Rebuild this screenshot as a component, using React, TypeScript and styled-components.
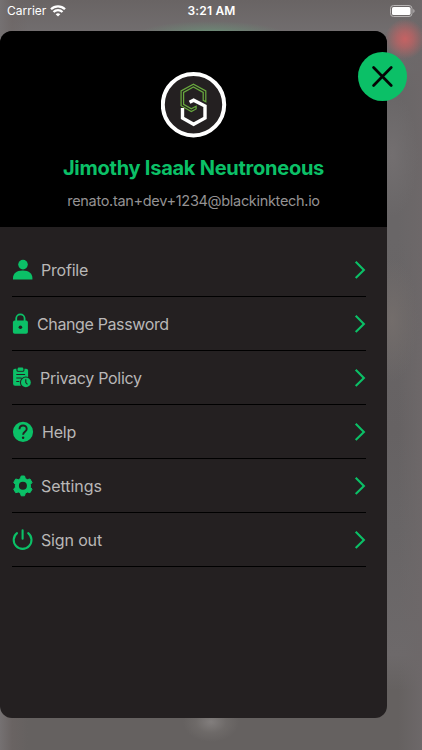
import React from "react";
import styled, { createGlobalStyle } from "styled-components";

const GREEN = "#0bc067";

const GlobalStyle = createGlobalStyle`
  * { box-sizing: border-box; }
  html, body { margin: 0; padding: 0; }
  body { font-family: Inter, "Liberation Sans", sans-serif; overflow: hidden; }
`;

const Screen = styled.div`
  width: 422px;
  height: 750px;
  overflow: hidden;
  background:
    radial-gradient(ellipse 20px 20px at 405px 39px, #c56263 0%, rgba(190, 98, 99, 0.75) 40%, rgba(150, 98, 98, 0) 100%),
    radial-gradient(ellipse 75px 14px at 211px 35px, #6a9a78 0%, rgba(106, 145, 120, 0.5) 45%, rgba(106, 130, 115, 0) 100%),
    radial-gradient(ellipse 28px 20px at 211px 722px, #827e7d 0%, rgba(118, 114, 112, 0.5) 55%, rgba(104, 99, 98, 0) 100%),
    radial-gradient(ellipse 26px 62px at 392px 155px, #736f70 0%, rgba(115, 111, 112, 0) 100%),
    radial-gradient(ellipse 26px 62px at 392px 320px, #736d6b 0%, rgba(115, 109, 107, 0) 100%),
    linear-gradient(90deg, #757172 0, rgba(110, 102, 101, 0.5) 12px, rgba(101, 97, 96, 0) 28px, rgba(101, 97, 96, 0) 398px, #6d6869 422px),
    linear-gradient(180deg, #696464 0, #716d6e 30px, #696667 90px, #696667 240px, #666263 430px, #686566 530px, #6d696a 655px, #656160 690px, #656160 750px);
`;

const StatusBar = styled.header`
  height: 31px;
  padding: 0 6px 9px 7px;
  display: grid;
  grid-template-columns: 1fr auto 1fr;
  align-items: center;
  color: #fff;
  font-size: 12px;
  line-height: 22px;
`;

const Carrier = styled.div`
  display: flex;
  align-items: center;
  gap: 4px;
`;

const Clock = styled.div`
  font-weight: 600;
  letter-spacing: 0.2px;
`;

const Battery = styled.div`
  display: flex;
  justify-content: flex-end;
`;

const Drawer = styled.aside`
  position: relative;
  width: 387px;
  height: 687px;
  border-radius: 12px;
  background: #242021;
`;

const DrawerHeader = styled.div`
  height: 196px;
  padding-top: 41px;
  border-radius: 12px 12px 0 0;
  background: #000;
  display: flex;
  flex-direction: column;
  align-items: center;
`;

const Name = styled.h1`
  margin: 17px 0 0;
  color: ${GREEN};
  font-size: 20px;
  line-height: 27px;
  font-weight: 700;
  letter-spacing: -0.25px;
  white-space: nowrap;
`;

const Email = styled.p`
  margin: 9px 0 0;
  color: #949293;
  font-size: 14.5px;
  line-height: 20px;
  letter-spacing: -0.31px;
  white-space: nowrap;
`;

const CloseButton = styled.button`
  position: absolute;
  top: 21px;
  right: -20px;
  width: 49px;
  height: 49px;
  padding: 0;
  border: 0;
  border-radius: 50%;
  background: ${GREEN};
  display: grid;
  place-items: center;
`;

const Menu = styled.nav`
  padding: 16px 21px 0 12px;
`;

const Row = styled.a`
  height: 54px;
  padding-top: 1px;
  border-bottom: 1px solid #000;
  display: flex;
  align-items: center;
  color: #b9b7b7;
  svg { flex: none; }
`;

const Label = styled.span<{ $gap: number; $spacing: number }>`
  flex: 1;
  margin-left: ${(p) => p.$gap}px;
  font-size: 16px;
  line-height: 22px;
  letter-spacing: ${(p) => p.$spacing}px;
`;

const Wifi = () => (
  <svg width="16" height="12" viewBox="0 0 16 12" fill="none" stroke="#fff" strokeWidth="2.3">
    <path d="M1 4.3a10 10 0 0 1 14 0" />
    <path d="M3.5 7a6.4 6.4 0 0 1 9 0" />
    <path d="M8 11.6 5.7 9.3a3.3 3.3 0 0 1 4.6 0z" fill="#fff" stroke="none" />
  </svg>
);

const BatteryIcon = () => (
  <svg width="26" height="12" viewBox="0 0 26 12">
    <rect x=".5" y=".5" width="21.5" height="11" rx="3" fill="none" stroke="#b8b5b5" />
    <rect x="2" y="2" width="18.5" height="8" rx="1.6" fill="#fff" />
    <path d="M23.3 4v4c1.7-.6 1.7-3.4 0-4z" fill="#b8b5b5" />
  </svg>
);

const Logo = () => (
  <svg width="66" height="66" viewBox="0 0 66 66" fill="none">
    <circle cx="32.5" cy="32.7" r="30.7" fill="#242021" stroke="#fff" strokeWidth="4" />
    <path
      d="M42.2 28.4v-8l-9.8-5.4-9.8 5.4v11.9l7.7 4.6 4.8-2.7v2.8l-4.8 2.6-10.2-5.9V18.9l12.3-6.6 12.4 6.6v10.9z"
      stroke="#68a83e"
      strokeWidth="1.25"
    />
    <path d="M21.5 36v9.9l11.1 6.3L44 45.9V34L32.6 28.2l-4 2.1" stroke="#fff" strokeWidth="3.4" />
  </svg>
);

const Cross = () => (
  <svg width="22" height="22" viewBox="0 0 22 22" stroke="#050505" strokeWidth="2.7" strokeLinecap="round">
    <path d="m1.6 1.5 17.6 18M19.2 1.5 1.6 19.5" />
  </svg>
);

const Chevron = () => (
  <svg width="12" height="20" viewBox="0 0 12 20" fill="none" stroke={GREEN} strokeWidth="2.1">
    <path d="m1.7 1.7 8.2 8.2-8.2 8.2" />
  </svg>
);

const Person = () => (
  <svg width="21" height="22" viewBox="0 0 21 22" fill={GREEN}>
    <circle cx="11" cy="5.6" r="4.8" />
    <path d="M1 20.5v-1.2c0-4.4 3.2-7.7 9.7-7.7s9.7 3.3 9.7 7.7v1.2z" />
  </svg>
);

const Lock = () => (
  <svg width="17" height="22" viewBox="0 0 17 22">
    <path d="M4.2 9V5.6a4.2 4.2 0 0 1 8.4 0V9" fill="none" stroke={GREEN} strokeWidth="1.8" />
    <path d="M2.7 7.6h11.4q1.8 0 1.8 1.8v9.6q0 1.8-1.8 1.8H2.7Q.9 20.8 .9 19V9.4Q.9 7.6 2.7 7.6z" fill={GREEN} />
    <circle cx="8.4" cy="14.3" r="1.8" fill="#242021" />
  </svg>
);

const Clipboard = () => (
  <svg width="20" height="22" viewBox="0 0 20 22" fill="none">
    <path d="M3 1.7h11.2q1.9 0 1.9 1.9V18.7H3Q1.1 18.7 1.1 16.8V3.6Q1.1 1.7 3 1.7z" fill={GREEN} />
    <path d="M5 1v2.2q0 1.1 1.1 1.1h4.7q1.1 0 1.1-1.1V1" stroke="#242021" strokeWidth="1.1" />
    <rect x="5.8" y=".5" width="5.4" height="2.9" rx=".9" fill={GREEN} />
    <path d="M4.3 7.5h8.8M4.3 11h5.3M4.3 14.5h3" stroke="#242021" strokeWidth="1.2" />
    <circle cx="13.9" cy="15.4" r="6" fill="#242021" />
    <circle cx="13.9" cy="15.4" r="4.9" fill={GREEN} />
    <path d="M13.8 12.3v3.3l1.7 1.7" stroke="#242021" strokeWidth="1.1" />
  </svg>
);

const Question = () => (
  <svg width="22" height="22" viewBox="0 0 22 22" fill="none">
    <circle cx="11" cy="10.8" r="10.1" fill={GREEN} />
    <path d="M7.5 8.2c0-5 7.2-4.8 7.2-.3 0 2.8-3.6 3-3.6 5.8" stroke="#242021" strokeWidth="1.9" />
    <circle cx="11.1" cy="16.7" r="1.25" fill="#242021" />
  </svg>
);

const Gear = () => (
  <svg width="22" height="22" viewBox="0 0 22 22" fill="none">
    <path
      d="M9.2 1h3.3l.8 2.6 2 1.1 2.7-.7 2 3.5-1.6 2v2.7l1.6 2-2 3.5-2.7-.7-2 1.2-.8 2.6H9.2l-.8-2.6-2-1.2-2.7.7-2-3.5 1.7-2V9.5l-1.7-2 2-3.5 2.7.7 2-1.1z"
      fill={GREEN}
      stroke={GREEN}
      strokeWidth="1"
      strokeLinejoin="round"
    />
    <circle cx="10.9" cy="10.8" r="4" fill="#242021" />
  </svg>
);

const Power = () => (
  <svg width="21" height="22" viewBox="0 0 21 22" fill="none" stroke={GREEN} strokeWidth="2.1" strokeLinecap="round">
    <path d="M10.6 1.4v8.4M5 4.1a8.9 8.9 0 1 0 11.2 0" />
  </svg>
);

const items = [
  { label: "Profile", icon: <Person />, gap: 8, spacing: -0.2 },
  { label: "Change Password", icon: <Lock />, gap: 8, spacing: -0.37 },
  { label: "Privacy Policy", icon: <Clipboard />, gap: 8, spacing: -0.3 },
  { label: "Help", icon: <Question />, gap: 8, spacing: -0.2 },
  { label: "Settings", icon: <Gear />, gap: 7, spacing: -0.05 },
  { label: "Sign out", icon: <Power />, gap: 8, spacing: -0.15 },
];

export default function App() {
  return (
    <Screen>
      <GlobalStyle />
      <StatusBar>
        <Carrier>Carrier<Wifi /></Carrier>
        <Clock>3:21 AM</Clock>
        <Battery><BatteryIcon /></Battery>
      </StatusBar>
      <Drawer>
        <DrawerHeader>
          <Logo />
          <Name>Jimothy Isaak Neutroneous</Name>
          <Email>renato.tan+dev+1234@blackinktech.io</Email>
        </DrawerHeader>
        <CloseButton aria-label="Close"><Cross /></CloseButton>
        <Menu>
          {items.map((item) => (
            <Row key={item.label}>
              {item.icon}
              <Label $gap={item.gap} $spacing={item.spacing}>{item.label}</Label>
              <Chevron />
            </Row>
          ))}
        </Menu>
      </Drawer>
    </Screen>
  );
}
